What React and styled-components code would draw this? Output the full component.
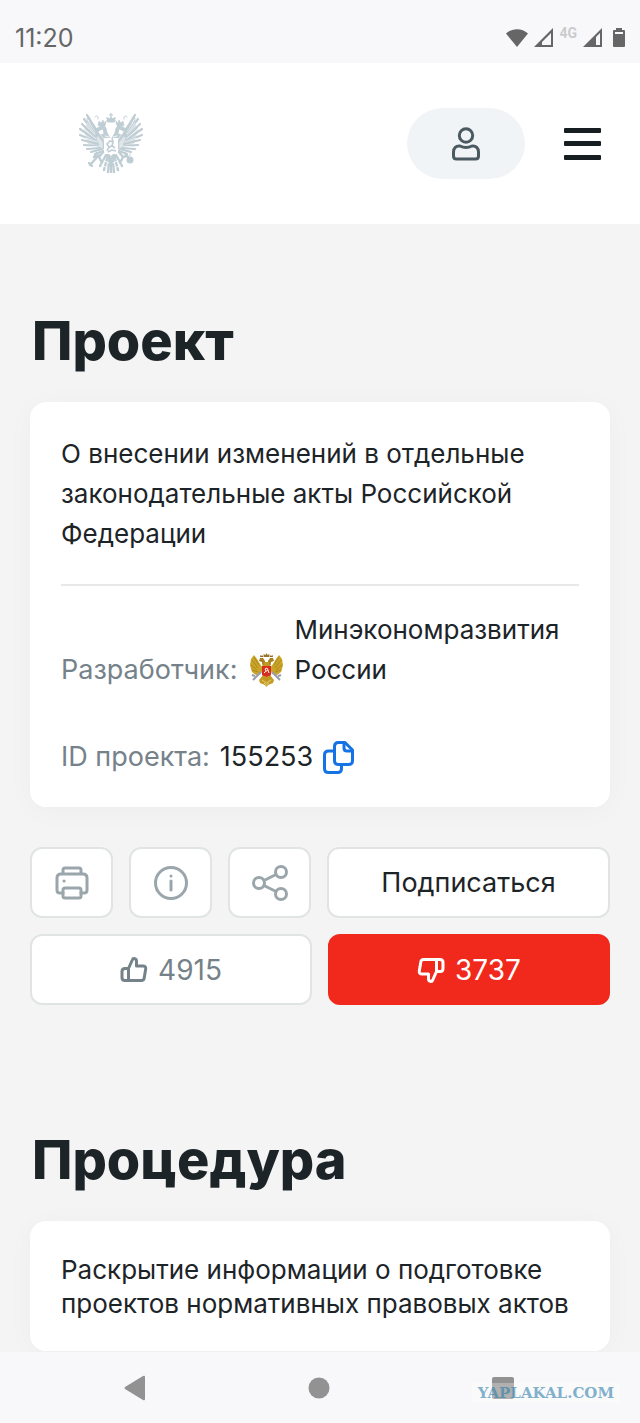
import React from "react";
import styled, { createGlobalStyle } from "styled-components";

const GlobalStyle = createGlobalStyle`
  *, *::before, *::after { box-sizing: border-box; }
  body {
    margin: 0;
    background: #f4f4f4;
    color: #1d2428;
    font-family: Inter, "Liberation Sans", sans-serif;
    font-size: 27px;
    line-height: 40px;
  }
  button { font: inherit; color: inherit; cursor: pointer; }
  svg { display: block; flex: none; }
`;

const Screen = styled.div`
  display: flex;
  flex-direction: column;
  min-height: 100vh;
`;

const StatusBar = styled.div`
  display: flex;
  align-items: flex-end;
  justify-content: space-between;
  height: 63px;
  padding: 0 15px 9px;
  background: #f8f8fb;
  color: #666;
`;

const Clock = styled.time`
  font-size: 25px;
  line-height: 32px;
`;

const StatusIcons = styled.div`
  display: flex;
  align-items: center;
  gap: 6px;
  height: 32px;
`;

const Network = styled.span`
  align-self: flex-start;
  font-family: Roboto, sans-serif;
  font-size: 14px;
  font-weight: 700;
  line-height: 22px;
  color: #cbcbcd;
`;

const Header = styled.header`
  display: flex;
  align-items: center;
  justify-content: space-between;
  height: 161px;
  padding: 0 39px 0 79px;
  background: #fff;
`;

const HeaderActions = styled.div`
  display: flex;
  align-items: center;
  gap: 39px;
`;

const IconButton = styled.button`
  display: flex;
  align-items: center;
  justify-content: center;
  padding: 0;
  border: 0;
  background: none;
`;

const UserButton = styled(IconButton)`
  width: 118px;
  height: 71px;
  border-radius: 36px;
  background: #f1f4f6;
  color: #4b5a60;
`;

const HomeLink = styled.a`
  display: block;
  color: #bfcdd4;
`;

const Main = styled.main`
  flex: 1;
  padding: 0 30px;
`;

const Section = styled.section`
  padding-top: ${(p) => p.$top}px;
`;

const Title = styled.h1`
  margin: 0 0 27px;
  padding: 0 2px;
  font-size: 54px;
  font-weight: 800;
  line-height: 68px;
`;

const Card = styled.div`
  padding: 32px 31px 30px;
  border-radius: 16px;
  background: #fff;
  box-shadow: 0 4px 28px rgba(0, 0, 0, 0.03);
`;

const Lead = styled.p`
  margin: 0;
  padding-bottom: 30px;
  border-bottom: 2px solid #e6e8e9;
  font-size: 26px;
`;

const Field = styled.div`
  display: flex;
  align-items: ${(p) => (p.$multiline ? "flex-end" : "center")};
  gap: ${(p) => (p.$multiline ? 12 : 10)}px;
  padding-top: ${(p) => (p.$multiline ? 24 : 47)}px;
`;

const Label = styled.span`
  flex: none;
  color: #75828a;
`;

const Developer = styled.span`
  display: flex;
  align-items: flex-end;
  gap: 10px;
  font-size: 26px;
`;

const EmblemSlot = styled.span`
  display: block;
  padding-bottom: 2px;
`;

const Stage = styled.p`
  margin: 0;
  font-size: 26px;
  line-height: 34px;
`;

const Actions = styled.div`
  display: flex;
  gap: 16px;
  padding-top: ${(p) => p.$top}px;
`;

const ActionButton = styled.button`
  display: flex;
  flex: ${(p) => (p.$square ? "0 0 83px" : "1 1 0")};
  align-items: center;
  justify-content: center;
  gap: 10px;
  height: 71px;
  padding: 0;
  border: 2px solid ${(p) => (p.$danger ? "#f1281c" : "#e1e4e5")};
  border-radius: 12px;
  background: ${(p) => (p.$danger ? "#f1281c" : "#fff")};
  && { color: ${(p) => (p.$danger ? "#fff" : p.$square ? "#9aa6ac" : p.$muted ? "#75828a" : "#1d2428")}; }
`;

const VoteCount = styled.span`
  font-size: 28px;
`;

const NavBar = styled.nav`
  position: relative;
  display: grid;
  grid-template-columns: 1fr 96px 1fr;
  align-items: center;
  height: 71px;
  padding: 0 122px 0 120px;
  background: #f8f8fb;
`;

const NavButton = styled(IconButton)`
  justify-self: ${(p) => p.$side};
  width: 30px;
  height: 30px;
  && { color: #929292; }
`;

const Watermark = styled.span`
  position: absolute;
  right: 20px;
  bottom: 20px;
  padding: 0 6px;
  background: rgba(255, 255, 255, 0.4);
  color: #4f93b8;
  opacity: 0.7;
  font-family: "DejaVu Serif", serif;
  font-size: 15px;
  font-weight: 700;
  line-height: 20px;
`;

const feathers = [
  "M19 21 8 2", "M18 23 5 6", "M17 25 3 11", "M17 27 1 16", "M18 29 1 22",
  "M19 31 3 27", "M20 33 5 32", "M21 35 8 36", "M23 36 12 39", "M24 38 16 41",
];

function EagleHalf() {
  return (
    <g fill="none" stroke="currentColor" strokeLinecap="round">
      <path d="M9 8c4 4 6 6 9 12l9 2v14l-7-1L9 31 5 17z" fill="currentColor" stroke="none" opacity=".5" />
      {feathers.map((d) => <path key={d} d={d} strokeWidth="2.2" />)}
      <path d="M9 4c4 7 8 11 10 17l6 8v6" strokeWidth="2.4" />
      <path d="M31 29c-1-5-5-7-5-11 0-3-2-4-4-3l-4 2" strokeWidth="4" />
      <path d="m24 22 5 5" strokeWidth="3" />
      <path d="m19 12 1-4 2 2 2-3 1 3 2-1-1 4h-6z" fill="currentColor" strokeWidth=".6" />
      <path d="M26 9c2-2 4-2 6-1M11 5c-3-2-4 1-2 4m7-5c1-2 4-1 3 2" strokeWidth="1" />
      <path d="m27 42-6 11M29 42l-4 15M31 41l-2 18" strokeWidth="2.400" />
      <path d="m25 38-5 6-4-1m4 1 2 4m-4-8-3 4" strokeWidth="2.4" />
      <path d="M16 21 8 10M17 26 6 17M18 29 7 25M21 33l-10 1" stroke="#fff" strokeWidth=".7" />
      <path d="m26 23 4 1m-5 3 3 1m-3 20 5 2m-7 2 5 3" stroke="#fff" strokeWidth=".8" />
    </g>
  );
}

function Emblem() {
  return (
    <svg width="64" height="64" viewBox="0 0 64 62" aria-hidden="true">
      <EagleHalf />
      <g transform="matrix(-1 0 0 1 64 0)"><EagleHalf /></g>
      <path d="M32 0v4m-2-2h4m-5 7-1-4 3 1 1-2 1 2 3-1-1 4z" fill="currentColor" stroke="currentColor" strokeWidth="1.2" />
      <path d="m20 42-9 10m-1-2 3 3" stroke="currentColor" strokeWidth="2.4" strokeLinecap="round" />
      <circle cx="51" cy="47" r="3.500" fill="currentColor" />
      <path d="M51 40v3m-3 4h6" stroke="currentColor" strokeWidth=".8" />
      <path d="M25 25h14v14l-3 2h-2l-2 2-2-2h-2l-3-2z" fill="#fff" />
      <path d="m28 38 2-4-2-3 3-3 3 1-1 4 3 2m-7 0 5-3m-5 7 4-2 4 1m-4-13 1 4" fill="none" stroke="currentColor" strokeWidth="1.6" />
      <path d="M32 45v15" stroke="currentColor" strokeWidth="2.4" />
    </svg>
  );
}

function GoldWing() {
  return (
    <g>
      <path d="M5 3 2 7l-1 6 1 4 1 3 4 3 5-1 2-6-3-4-3-5z" fill="#c9a428" />
      <path d="m5 5 5 8M3 8l6 8M2 13l6 5M3 18l6 2" fill="none" stroke="#a88318" strokeWidth=".8" />
      <path d="M16 17c-2-2-3-4-3-7l-3-1 1-3h3l2 3z" fill="#a87f1e" />
      <path d="m11 5 .5-2 1.500 1 1-1 .5 2z" fill="#8f6e25" />
      <path d="M12 20 8 24l-4 4m2-4-3-1" fill="none" stroke="#989dab" strokeWidth="2" />
      <path d="m14 23-4 5 1 3 5 2V22z" fill="#c49c24" />
    </g>
  );
}

function GoldEmblem() {
  return (
    <svg width="35" height="36" viewBox="0 0 35 36" aria-hidden="true">
      <GoldWing />
      <g transform="matrix(-1 0 0 1 35 0)"><GoldWing /></g>
      <path d="M15 10h5l2 8-2 14-2.500 3-2.500-3-2-14z" fill="#c19921" />
      <path d="m15 5-.5-3 2 1 1-2 1 2 2-1-.5 3z" fill="#9a7628" />
      <path d="m13 28 4.500 3 4.500-3M15 31l2.500 2 2.500-2" fill="none" stroke="#eedb8a" strokeWidth=".8" />
      <path d="M13 14h9v9l-2 1h-1l-1.500 1-1.500-1h-1l-2-1z" fill="#d62d20" />
      <path d="m15 21 2-2-1-2 2-1 1 2 1 3m-4-1 3-2" fill="none" stroke="#fff1dc" strokeWidth="1" />
    </svg>
  );
}

function Icon({ width, height = width, stroke = 3, children }) {
  return (
    <svg width={width} height={height} viewBox={`0 0 ${width} ${height}`} fill="none"
      stroke="currentColor" strokeWidth={stroke} strokeLinecap="round" strokeLinejoin="round" aria-hidden="true">
      {children}
    </svg>
  );
}

const Thumb = ({ down }) => (
  <Icon width={28}>
    <g transform={down ? "rotate(180 14 14)" : undefined}>
      <path d="M8.500 12.500 12.500 3.500c.6-1.600 4-1 4 1.500V10H23c2 0 3 1 2.700 3l-1.500 9c-.3 1.700-1.200 2.500-2.700 2.500H5c-2 0-3-1-3-3v-6c0-2 1-3 3-3h3.500zm0 0v12" />
    </g>
  </Icon>
);

const CopyIcon = () => (
  <svg width="31" height="33" viewBox="0 0 31 33" fill="none" stroke="#1673e6" strokeWidth="3" strokeLinejoin="round" aria-hidden="true">
    <path d="M11 10H5.500q-4 0-4 4v13.500q0 4 4 4h9q4 0 4-4V24" />
    <path d="M15.500 1.500H22l7.500 7.500v10.500q0 4-4 4h-10q-4 0-4-4v-14q0-4 4-4z" />
    <path d="M21 2v5q0 3 3 3h5" />
  </svg>
);

export default function App() {
  return (
    <Screen>
      <GlobalStyle />
      <StatusBar>
        <Clock>11:20</Clock>
        <StatusIcons>
          <svg width="22" height="20" viewBox="0 0 22 20" fill="currentColor" aria-hidden="true">
            <path d="M0 5.500C6-.3 16-.3 22 5.500L11 19z" />
          </svg>
          <svg width="19" height="20" viewBox="0 0 19 20" fill="currentColor" aria-hidden="true">
            <path fillRule="evenodd" d="M0 19 19 0v19zM8 17h9V5L8 14z" />
          </svg>
          <Network>4G</Network>
          <svg width="19" height="20" viewBox="0 0 19 20" fill="currentColor" aria-hidden="true">
            <path fillRule="evenodd" d="M0 19 19 0v19zM13 17h4V5l-4 4z" />
          </svg>
          <svg width="17" height="20" viewBox="0 0 17 20" fill="currentColor" aria-hidden="true">
            <path fillRule="evenodd" d="M8 0h6v2h2q1 0 1 1v15q0 1-1 1H6q-1 0-1-1V3q0-1 1-1h2zM7 4v2h8V4z" />
          </svg>
        </StatusIcons>
      </StatusBar>

      <Header>
        <HomeLink href="#" aria-label="Главная"><Emblem /></HomeLink>
        <HeaderActions>
          <UserButton aria-label="Личный кабинет">
            <Icon width={28} height={34}>
              <circle cx="14" cy="8.500" r="6.700" />
              <path d="M8 19c4 2 8 2 12 0 4-.5 6.500 2 6.500 6v4q0 3-3 3h-19q-3 0-3-3v-4c0-4 2.500-6.500 6.500-6z" />
            </Icon>
          </UserButton>
          <IconButton aria-label="Меню">
            <svg width="37" height="32" viewBox="0 0 37 32" fill="#171e22" aria-hidden="true">
              <rect width="37" height="5" rx="1" /><rect y="13" width="37" height="5" rx="1" />
              <rect y="27" width="37" height="5" rx="1" />
            </svg>
          </IconButton>
        </HeaderActions>
      </Header>

      <Main>
        <Section $top={83}>
          <Title>Проект</Title>
          <Card>
            <Lead>О внесении изменений в отдельные законодательные акты Российской Федерации</Lead>
            <Field $multiline>
              <Label>Разработчик:</Label>
              <Developer>
                <EmblemSlot><GoldEmblem /></EmblemSlot>
                <span>Минэкономразвития России</span>
              </Developer>
            </Field>
            <Field>
              <Label>ID проекта:</Label>
              <span>155253</span>
              <IconButton aria-label="Скопировать ID"><CopyIcon /></IconButton>
            </Field>
          </Card>
          <Actions $top={40}>
            <ActionButton $square aria-label="Печать">
              <Icon width={34}>
                <path d="M8 8V4q0-2 2-2h14q2 0 2 2v4M8 27H5q-3 0-3-3V12q0-4 4-4h22q4 0 4 4v12q0 3-3 3h-3" />
                <rect x="8" y="22" width="18" height="10" rx="2" /><path d="M9 15h.1" />
              </Icon>
            </ActionButton>
            <ActionButton $square aria-label="Информация">
              <Icon width={34}>
                <circle cx="17" cy="17" r="15.500" /><path d="M17 15v9M17 10v.1" />
              </Icon>
            </ActionButton>
            <ActionButton $square aria-label="Поделиться">
              <Icon width={36}>
                <circle cx="7" cy="18" r="5.500" /><circle cx="29" cy="7" r="5.500" /><circle cx="29" cy="29" r="5.500" />
                <path d="m12 15.500 12-6m-12 11 12 6" />
              </Icon>
            </ActionButton>
            <ActionButton>Подписаться</ActionButton>
          </Actions>
          <Actions $top={16}>
            <ActionButton $muted aria-label="Нравится: 4915"><Thumb /><VoteCount>4915</VoteCount></ActionButton>
            <ActionButton $danger aria-label="Не нравится: 3737"><Thumb down /><VoteCount>3737</VoteCount></ActionButton>
          </Actions>
        </Section>

        <Section $top={121}>
          <Title as="h2">Процедура</Title>
          <Card>
            <Stage>Раскрытие информации о подготовке проектов нормативных правовых актов</Stage>
          </Card>
        </Section>
      </Main>

      <NavBar aria-label="Системная навигация">
        <NavButton $side="start" aria-label="Назад">
          <svg width="24" height="26" viewBox="0 0 24 26" fill="currentColor" aria-hidden="true">
            <path d="M2 12 20 1q2-1 2 1v22q0 2-2 1L2 14q-1-1 0-2z" />
          </svg>
        </NavButton>
        <NavButton $side="center" aria-label="Домой">
          <svg width="22" height="22" viewBox="0 0 22 22" fill="currentColor" aria-hidden="true"><circle cx="11" cy="11" r="10.500" /></svg>
        </NavButton>
        <NavButton $side="end" aria-label="Недавние">
          <svg width="22" height="22" viewBox="0 0 22 22" fill="currentColor" aria-hidden="true"><rect width="22" height="22" rx="2" /></svg>
        </NavButton>
        <Watermark>YAPLAKAL.COM</Watermark>
      </NavBar>
    </Screen>
  );
}
